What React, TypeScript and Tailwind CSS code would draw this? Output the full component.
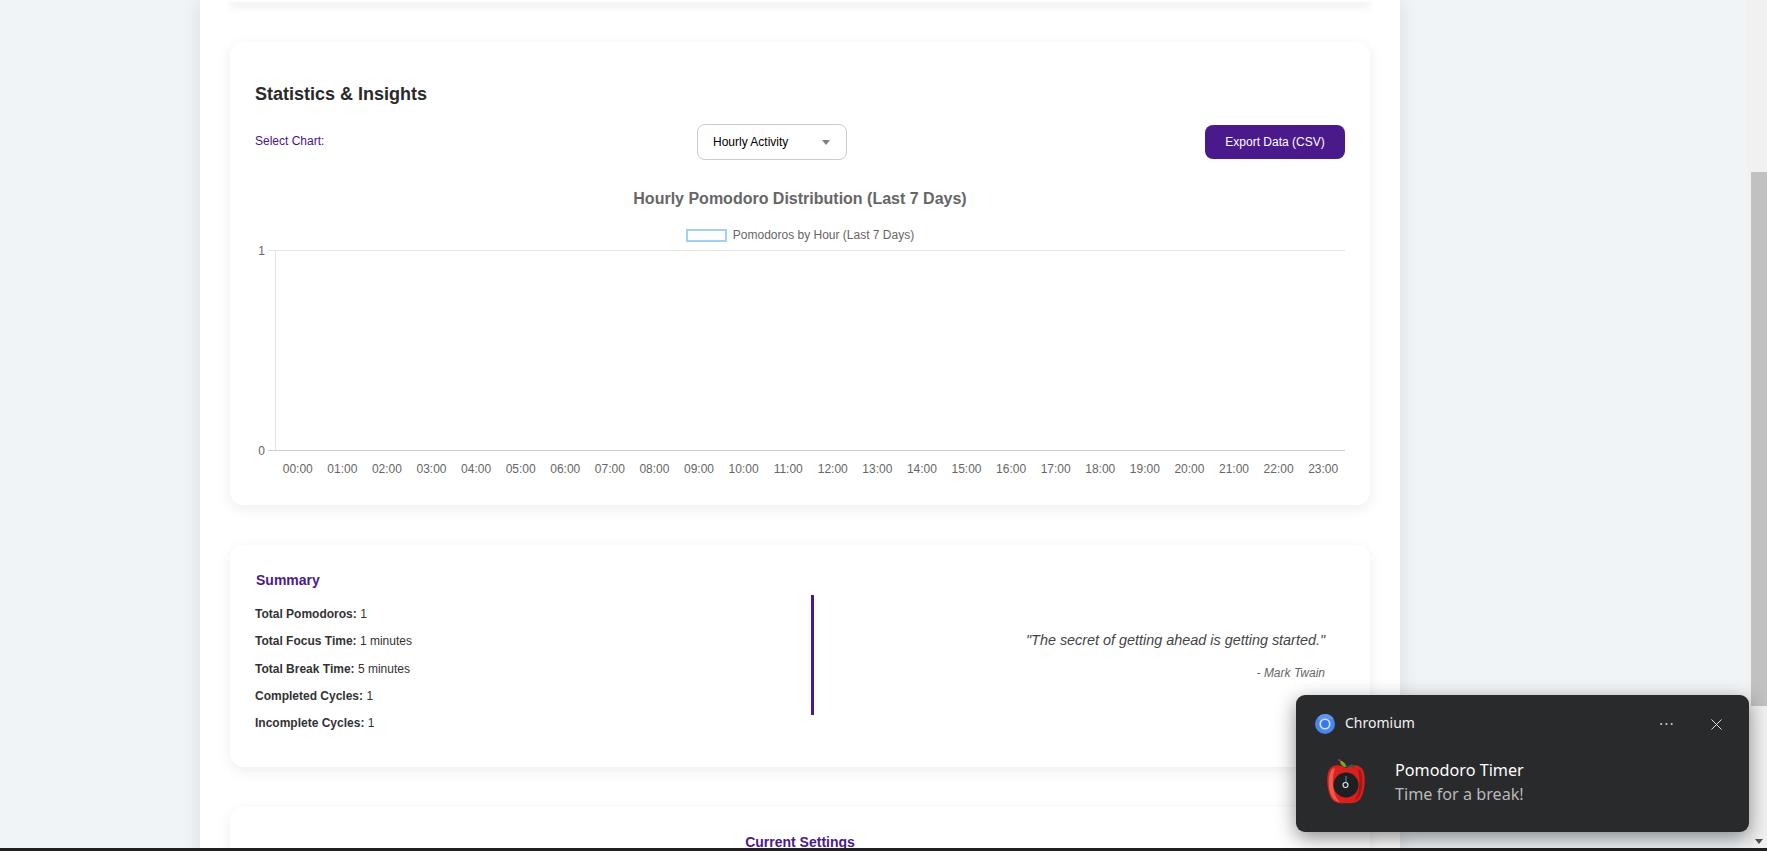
import { X } from 'lucide-react';

// ─── Constants ───────────────────────────────────────────────────────────────

const HOURS = Array.from({ length: 24 }, (_, i) => `${String(i).padStart(2, '0')}:00`);

const SUMMARY_ROWS = [
  { label: 'Total Pomodoros:', value: '1' },
  { label: 'Total Focus Time:', value: '1 minutes' },
  { label: 'Total Break Time:', value: '5 minutes' },
  { label: 'Completed Cycles:', value: '1' },
  { label: 'Incomplete Cycles:', value: '1' },
];

// ─── Chart ───────────────────────────────────────────────────────────────────

function HourlyChart() {
  // svg origin sits at page x=243, y=245
  const left = 32;
  const right = 1102;
  const top = 5;
  const bottom = 205;
  const step = (right - left) / 24;

  return (
    <svg width="1102" height="235" className="block ml-[-12px]" fontFamily="'Liberation Sans', Arial, sans-serif" fontSize="12" fill="#666666">
      <line x1={left - 7} x2={right} y1={top + 0.5} y2={top + 0.5} stroke="#e4e4e4" />
      <line x1={left + 0.5} x2={left + 0.5} y1={top} y2={bottom} stroke="#e4e4e4" />
      <line x1={left - 7} x2={right} y1={bottom + 0.5} y2={bottom + 0.5} stroke="#cfcfcf" />
      <text x={left - 10} y={top + 4.5} textAnchor="end">1</text>
      <text x={left - 10} y={bottom + 4.5} textAnchor="end">0</text>
      {HOURS.map((h, i) => (
        <text key={h} x={left + 0.5 + step * (i + 0.5)} y={bottom + 22.5} textAnchor="middle">
          {h}
        </text>
      ))}
    </svg>
  );
}

// ─── Notification icons ──────────────────────────────────────────────────────

function ChromiumIcon() {
  return (
    <svg width="20" height="20" viewBox="0 0 20 20" className="shrink-0">
      <circle cx="10" cy="10" r="10" fill="#4a86e8" />
      <path d="M10 0a10 10 0 0 1 8.7 5H10a5 5 0 0 0-4.6 3L3 3.2A10 10 0 0 1 10 0z" fill="#5f97ee" />
      <circle cx="10" cy="10" r="5.6" fill="#cfe0fb" />
      <circle cx="10" cy="10" r="3.9" fill="#3b78e7" />
    </svg>
  );
}

function AppleIcon() {
  return (
    <svg width="38" height="45" viewBox="0 0 38 45" className="shrink-0">
      <path d="M19 9C13 5 5 5 2 11C-1 18 0 30 3.500 38C6.500 44 13 45 19 44C25 45 31.500 44 34.500 38C38 30 39 18 36 11C33 5 25 5 19 9Z" fill="#d8201f" />
      <path d="M5 10C1 16 0.500 28 4.500 37C6.500 41 10 43 13 43C7 38 3.500 24 8 9Z" fill="#ef5a4c" />
      <path d="M33.500 12C36.500 20 36 30 32.500 37C31.500 39 29 41 27 42C32 36 34 24 31 10Z" fill="#a91514" />
      <circle cx="19" cy="26" r="12.500" fill="#1d1f20" />
      <path d="M13 1.500C16 2 18.500 4 19.500 8C16 8 13 6 13 1.500Z" fill="#7fa12e" />
      <path d="M11 0.500L14 2" stroke="#b23a2c" strokeWidth="1.4" />
      <path d="M20 8.500L25 6L27 8.500" stroke="#34594a" strokeWidth="1.6" fill="none" />
      <line x1="19" y1="17" x2="19" y2="24" stroke="#4a7fb0" strokeWidth="1.2" />
      <circle cx="18.500" cy="26" r="2.500" fill="none" stroke="#e8e8e8" strokeWidth="1.1" />
    </svg>
  );
}

function Notification() {
  return (
    <div className="absolute left-[1296px] top-[695px] w-[453px] h-[137px] rounded-[9px] bg-[#292a2b] shadow-[0_6px_20px_rgba(0,0,0,0.45)] font-['Noto_Sans','Open_Sans',sans-serif]">
      <div className="flex items-center h-[20px] mt-[19px] ml-[19px]">
        <ChromiumIcon />
        <span className="ml-[10px] mt-[-2px] text-[14px] leading-[20px] text-[#f2f2f2]">Chromium</span>
        <span className="ml-auto text-[14px] leading-[20px] tracking-[1.5px] text-[#d8d8d8]">···</span>
        <X size={19} strokeWidth={1.2} className="ml-[32px] mr-[23px] text-[#e8e8e8]" />
      </div>
      <div className="flex mt-[25px] ml-[31px]">
        <AppleIcon />
        <div className="ml-[30px] mt-[-1px]">
          <p className="text-[16.2px] leading-[24px] text-[#ffffff]">Pomodoro Timer</p>
          <p className="text-[16.2px] leading-[24px] text-[#b9b9b9]">Time for a break!</p>
        </div>
      </div>
    </div>
  );
}

// ─── Main ────────────────────────────────────────────────────────────────────

export default function App() {
  return (
    <div className="relative w-[1767px] h-[851px] overflow-hidden flex flex-col bg-[#f0f4f7] font-['Liberation_Sans',Arial,sans-serif]">
      <div className="flex h-[848px] overflow-hidden">
        {/* Page column */}
        <div className="ml-[200px] w-[1200px] h-[900px] px-[30px] bg-white shadow-[0_0_20px_rgba(0,0,0,0.09)]">
          <div className="h-[2px] rounded-b-[12px] shadow-[0_3px_8px_rgba(0,0,0,0.22)]" />

          {/* Statistics card */}
          <section className="mt-[40px] h-[463px] rounded-[14px] bg-white px-[25px] pt-[41px] shadow-[0_4px_15px_rgba(0,0,0,0.07)]">
            <h2 className="text-[18px] leading-[22px] font-bold text-[#2a2a2a]">Statistics &amp; Insights</h2>

            <div className="flex items-center mt-[19px] h-[36px]">
              <span className="w-[68px] mt-[-2px] text-[12px] text-[#4a148c] whitespace-nowrap">Select Chart:</span>
              <div className="ml-[374px] flex items-center w-[150px] h-[36px] pl-[15px] rounded-[8px] border border-[#cccccc] bg-white">
                <span className="text-[12px] text-black">Hourly Activity</span>
                <span className="ml-[34px] w-0 h-0 border-x-[4px] border-x-transparent border-t-[5px] border-t-[#808080]" />
              </div>
              <button className="ml-auto w-[140px] h-[34px] rounded-[8px] bg-[#4a1a8c] text-[12px] text-white">Export Data (CSV)</button>
            </div>

            <h3 className="mt-[29px] text-center text-[16px] leading-[20px] font-bold text-[#666666]">
              Hourly Pomodoro Distribution (Last 7 Days)
            </h3>

            <div className="flex items-center justify-center mt-[19px] h-[14px]">
              <span className="w-[41px] h-[13px] border-2 border-[#a4d0f5] bg-[#fbfdff]" />
              <span className="ml-[6px] text-[12px] text-[#666666]">Pomodoros by Hour (Last 7 Days)</span>
            </div>

            <div className="mt-[3px]">
              <HourlyChart />
            </div>
          </section>

          {/* Summary card */}
          <section className="mt-[40px] h-[222px] rounded-[14px] bg-white pl-[25px] pr-[45px] pt-[26px] flex shadow-[0_4px_15px_rgba(0,0,0,0.07)]">
            <div className="w-[556px]">
              <h3 className="ml-[1px] text-[14px] leading-[19px] font-bold text-[#4a1a8c]">Summary</h3>
              <div className="mt-[11px]">
                {SUMMARY_ROWS.map(row => (
                  <p key={row.label} className="h-[27.25px] text-[12px] leading-[27.25px] text-[#333333]">
                    <strong className="font-bold">{row.label}</strong> {row.value}
                  </p>
                ))}
              </div>
            </div>
            <div className="w-[3px] h-[120px] mt-[24px] bg-[#4a1a8c]" />
            <div className="flex-1 mt-[59px] text-right italic">
              <p className="text-[14.4px] leading-[20px] text-[#444444]">"The secret of getting ahead is getting started."</p>
              <p className="mt-[15px] text-[12px] leading-[16px] text-[#666666]">- Mark Twain</p>
            </div>
          </section>

          {/* Current settings card, cut off by the fold */}
          <section className="mt-[40px] h-[200px] rounded-[14px] bg-white pt-[25px] shadow-[0_4px_15px_rgba(0,0,0,0.07)]">
            <h3 className="text-center text-[14px] leading-[20px] font-bold text-[#4a1a8c]">Current Settings</h3>
          </section>
        </div>

        {/* Scrollbar */}
        <div className="ml-auto w-[20px] pl-[4px] bg-[#f1f1f1] flex flex-col">
          <div className="h-[172px]" />
          <div className="h-[534px] bg-[#c1c1c1]" />
          <div className="flex-1" />
          <div className="h-[14px] flex items-center justify-center">
            <span className="w-0 h-0 border-x-[4px] border-x-transparent border-t-[5px] border-t-[#505050]" />
          </div>
        </div>
      </div>

      {/* Desktop taskbar edge */}
      <div className="h-[3px] bg-[#202020]" />

      <Notification />
    </div>
  );
}
